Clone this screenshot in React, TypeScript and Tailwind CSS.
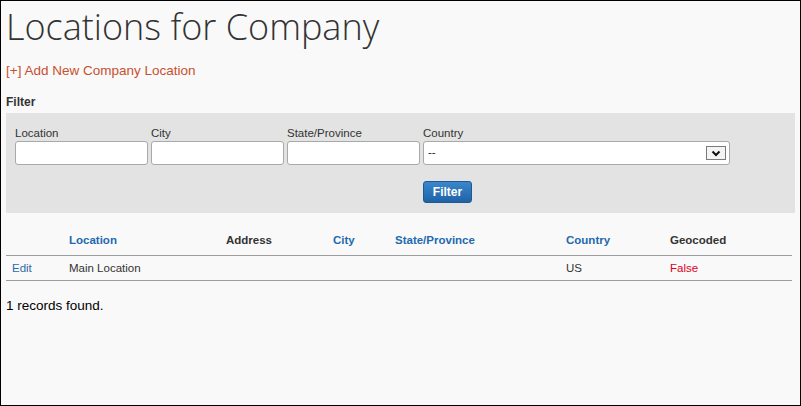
import type { ReactNode } from "react";

const fields = ["Location", "City", "State/Province"];

function Th({ children, link }: { children: ReactNode; link?: boolean }) {
  return (
    <th
      className={`h-[30px] pl-[6px] text-left align-middle font-bold ${link ? "text-[#2369b0]" : "text-[#333]"}`}
    >
      {children}
    </th>
  );
}

export default function App() {
  return (
    <div className="box-border h-[406px] w-[801px] overflow-hidden border border-black bg-[#f9f9f9] font-['Liberation_Sans',Arial,sans-serif] text-[#333]">
      <div className="px-[5px]">
        <h1 className="mt-[1px] font-['Open_Sans',sans-serif] text-[36px] font-light leading-[49px] text-[#333]">
          Locations for Company
        </h1>
        <a className="mt-[12px] block h-[16px] text-[13.5px] leading-[16px] text-[#c9502f]">
          [+] Add New Company Location
        </a>
        <div className="mt-[16px] h-[14px] text-[12px] font-bold leading-[14px]">Filter</div>

        <div className="mt-[4px] bg-[#e2e3e2] px-[9px] pt-[13px] pb-[10px]">
          <div className="grid grid-cols-[133px_133px_133px_307px] gap-x-[3px] text-[11.5px]">
            {fields.map((f) => (
              <div key={f}>
                <div className="h-[15px] leading-[15px]">{f}</div>
                <div className="box-border h-[24px] rounded-[3px] border border-[#a9a9a9] bg-white" />
              </div>
            ))}
            <div>
              <div className="h-[15px] leading-[15px]">Country</div>
              <div className="box-border flex h-[24px] items-center justify-between rounded-[3px] border border-[#a9a9a9] bg-white pr-[3px] pl-[4px]">
                <span className="text-[11.5px] text-[#222]">--</span>
                <div className="box-border flex h-[14px] w-[20px] items-center justify-center border border-[#7a7a7a] bg-[#f4f4f4]">
                  <svg width="10" height="7" viewBox="0 0 10 7">
                    <path d="M1.5 1.5 L5 5 L8.5 1.5" fill="none" stroke="#111" strokeWidth="2" />
                  </svg>
                </div>
              </div>
            </div>
            <div className="col-start-4 mt-[16px]">
              <button
                type="button"
                className="box-border h-[22px] w-[49px] rounded-[3px] border border-[#1b5a97] bg-gradient-to-b from-[#3b86cb] to-[#1f63a6] text-[12px] font-bold text-white"
              >
                Filter
              </button>
            </div>
          </div>
        </div>

        <table className="mt-[12px] w-[786px] table-fixed border-collapse text-[11.5px] leading-[14px]">
          <colgroup>
            <col className="w-[57px]" />
            <col className="w-[157px]" />
            <col className="w-[107px]" />
            <col className="w-[62px]" />
            <col className="w-[171px]" />
            <col className="w-[104px]" />
            <col />
          </colgroup>
          <thead>
            <tr className="border-b border-[#9d9d9d]">
              <Th>{""}</Th>
              <Th link>Location</Th>
              <Th>Address</Th>
              <Th link>City</Th>
              <Th link>State/Province</Th>
              <Th link>Country</Th>
              <Th>Geocoded</Th>
            </tr>
          </thead>
          <tbody>
            <tr className="h-[25px] border-b border-[#9d9d9d]">
              <td className="pl-[6px] text-[#2d6aa8]">Edit</td>
              <td className="pl-[6px]">Main Location</td>
              <td className="pl-[6px]"></td>
              <td className="pl-[6px]"></td>
              <td className="pl-[6px]"></td>
              <td className="pl-[6px]">US</td>
              <td className="pl-[6px] text-[#e0001a]">False</td>
            </tr>
          </tbody>
        </table>

        <div className="mt-[17px] text-[13.5px] leading-[16px] text-black">1 records found.</div>
      </div>
    </div>
  );
}
